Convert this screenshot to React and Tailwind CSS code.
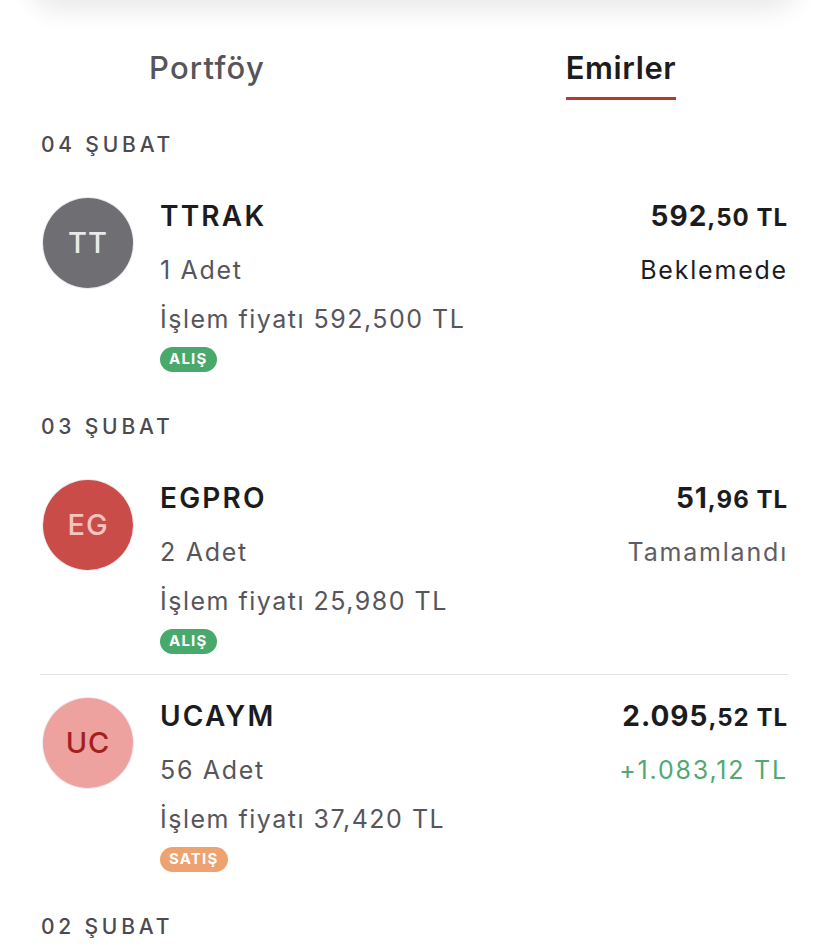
const orders = [
  {
    date: '04 ŞUBAT',
    items: [
      {
        code: 'TTRAK',
        initials: 'TT',
        avatar: 'bg-[#6f6e73] text-[#e9e9ec]',
        qty: '1 Adet',
        price: '592,500 TL',
        whole: '592',
        frac: ',50 TL',
        status: 'Beklemede',
        statusColor: 'text-[#1c1c1f]',
        side: 'ALIŞ',
      },
    ],
  },
  {
    date: '03 ŞUBAT',
    items: [
      {
        code: 'EGPRO',
        initials: 'EG',
        avatar: 'bg-[#c94c49] text-[#f5c4bf]',
        qty: '2 Adet',
        price: '25,980 TL',
        whole: '51',
        frac: ',96 TL',
        status: 'Tamamlandı',
        statusColor: 'text-[#5f5d64]',
        side: 'ALIŞ',
      },
      {
        code: 'UCAYM',
        initials: 'UC',
        avatar: 'bg-[#eda29f] text-[#a41f1f]',
        qty: '56 Adet',
        price: '37,420 TL',
        whole: '2.095',
        frac: ',52 TL',
        status: '+1.083,12 TL',
        statusColor: 'text-[#52a872]',
        side: 'SATIŞ',
      },
    ],
  },
  { date: '02 ŞUBAT', items: [] },
];

const OrderRow = ({ item, first }) => (
  <div className={`flex items-start ${first ? 'pt-[39px]' : 'pt-[23px] border-t border-[#e3e3e5]'} pb-[20px]`}>
    <div className={`w-[90px] h-[90px] ml-[3px] rounded-full flex items-center justify-center text-[29px] font-medium tracking-[1px] ring-1 ring-[#ececee] ${item.avatar}`}>
      {item.initials}
    </div>
    <div className="ml-[27px] flex-1">
      <div className="h-[36px] leading-[36px] text-[28px] font-semibold tracking-[2.2px] text-[#1c1c1f]">{item.code}</div>
      <div className="mt-[18px] h-[36px] leading-[36px] text-[25px] tracking-[1.7px] text-[#57555c]">{item.qty}</div>
      <div className="mt-[13px] h-[36px] leading-[36px] text-[25px] tracking-[1.5px] text-[#57555c]">İşlem fiyatı {item.price}</div>
      <div
        className={`mt-[10px] inline-flex items-center h-[25px] px-[9px] rounded-full text-[15px] font-bold tracking-[1.2px] text-white ${item.side === 'ALIŞ' ? 'bg-[#49a86b]' : 'bg-[#eea26f]'}`}
      >
        {item.side}
      </div>
    </div>
    <div className="text-right">
      <div className="h-[36px] leading-[36px] font-bold tracking-[1px] text-[#1c1c1f]">
        <span className="text-[28px]">{item.whole}</span>
        <span className="text-[24px]">{item.frac}</span>
      </div>
      <div className={`mt-[18px] h-[36px] leading-[36px] text-[25px] tracking-[1.8px] ${item.statusColor}`}>{item.status}</div>
    </div>
  </div>
);

const App = () => {
  return (
    <div className="w-[828px] h-[945px] overflow-hidden bg-white" style={{ fontFamily: 'Inter, "Noto Sans", sans-serif' }}>
      {/* header card shadow above */}
      <div className="-mt-[60px] mx-[30px] h-[60px] rounded-b-[28px] bg-white shadow-[0_10px_26px_rgba(0,0,0,0.09)]" />

      {/* tabs */}
      <div className="grid grid-cols-2 pt-[48px]">
        <div className="flex flex-col items-center">
          <div className="h-[40px] leading-[40px] text-[31px] font-medium tracking-[1.2px] text-[#57555c]">Portföy</div>
        </div>
        <div className="flex flex-col items-center">
          <div className="flex flex-col items-stretch">
            <div className="h-[40px] leading-[40px] text-[31px] font-semibold tracking-[0.6px] text-[#1c1c1f]">Emirler</div>
            <div className="mt-[9px] h-[3px] bg-[#b8372e]" />
          </div>
        </div>
      </div>

      <div className="px-[40px] pt-[31px]">
        {orders.map((group, gi) => (
          <div key={group.date}>
            <div className={`${gi > 0 ? 'mt-[21px]' : ''} h-[28px] leading-[28px] pl-[1px] text-[21px] font-medium tracking-[3.8px] text-[#4b4a50]`}>
              {group.date}
            </div>
            {group.items.map((item, i) => (
              <OrderRow key={item.code} item={item} first={i === 0} />
            ))}
          </div>
        ))}
      </div>
    </div>
  );
};

export default App;
